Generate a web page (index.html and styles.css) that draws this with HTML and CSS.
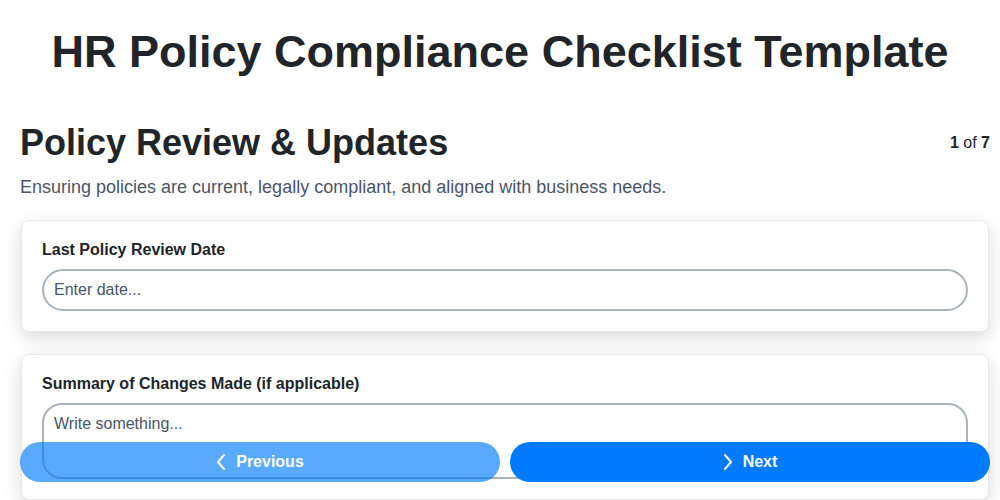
FILE: index.html
```html
<!DOCTYPE html>
<html>

<head>
  <meta charset="UTF-8">
  <title>HR Policy Compliance Checklist Template</title>
  <link rel="stylesheet" href="styles.css">
</head>

<body>
  <h1 class="page-title">HR Policy Compliance Checklist Template</h1>

  <div class="section-head">
    <h2 class="section-title">Policy Review &amp; Updates</h2>
    <div class="step-count"><b>1</b> of <b>7</b></div>
  </div>
  <p class="section-desc">Ensuring policies are current, legally compliant, and aligned with business needs.</p>

  <form class="checklist">
    <div class="card">
      <label for="review-date" class="field-label">Last Policy Review Date</label>
      <input type="text" id="review-date" class="field-input" placeholder="Enter date...">
    </div>
    <div class="card">
      <label for="changes" class="field-label">Summary of Changes Made (if applicable)</label>
      <textarea id="changes" class="field-textarea" rows="3" placeholder="Write something..."></textarea>
    </div>
  </form>

  <div class="nav-bar">
    <button type="button" class="nav-button prev">
      <svg class="chev" width="10" height="16" viewBox="0 0 10 16"><path d="M8 1 L2 8 L8 15" fill="none" stroke="#fff" stroke-width="2" stroke-linecap="round" stroke-linejoin="round"/></svg>
      Previous
    </button>
    <button type="button" class="nav-button next">
      <svg class="chev" width="10" height="16" viewBox="0 0 10 16"><path d="M2 1 L8 8 L2 15" fill="none" stroke="#fff" stroke-width="2" stroke-linecap="round" stroke-linejoin="round"/></svg>
      Next
    </button>
  </div>
</body>

</html>
```

FILE: styles.css
```css
html {
  height: 100%;
}

body {
  font-family: "Liberation Sans", Arial, Helvetica, sans-serif;
  color: #212529;
  margin: 0;
  padding: 26px 10px 0 20px;
  overflow: hidden;
  box-sizing: border-box;
  height: 100%;
}

.page-title {
  font-size: 45px;
  font-weight: bold;
  text-align: center;
  margin: 0 0 44px -10px;
}

.section-head {
  display: flex;
  justify-content: space-between;
  align-items: center;
}

.section-title {
  font-size: 36px;
  font-weight: bold;
  margin: 0;
}

.step-count {
  font-size: 16px;
}

.section-desc {
  font-size: 18px;
  color: #4a5568;
  margin: 13px 0 22px 0;
}

.card {
  background: #fff;
  border: 1px solid #e5e7eb;
  border-radius: 8px;
  box-shadow: 0 6px 18px rgba(0, 0, 0, 0.15);
  padding: 19px 20px 20px 20px;
  margin: 0 1px 22px 1px;
}

.field-label {
  display: block;
  font-size: 16px;
  font-weight: bold;
  line-height: 19px;
  margin-bottom: 10px;
}

.field-input,
.field-textarea {
  display: block;
  width: 100%;
  box-sizing: border-box;
  font-family: inherit;
  font-size: 16px;
  line-height: 19px;
  color: #212529;
  border: 2px solid #a9b3bc;
  outline: none;
  background: #fff;
}

.field-input {
  border-radius: 21px;
  padding: 9px 10px;
  height: 42px;
}

.field-textarea {
  border-radius: 20px;
  padding: 9px 10px;
  height: 76px;
  resize: none;
}

.field-input::placeholder,
.field-textarea::placeholder {
  color: #4a5568;
}

.nav-bar {
  position: fixed;
  left: 20px;
  right: 10px;
  bottom: 18px;
  display: flex;
  gap: 10px;
}

.nav-button {
  flex: 1;
  height: 40px;
  border: none;
  border-radius: 20px;
  background-color: #007bff;
  color: #fff;
  font-family: inherit;
  font-size: 16px;
  font-weight: bold;
  display: flex;
  align-items: center;
  justify-content: center;
  gap: 10px;
  cursor: pointer;
}

.nav-button.prev {
  opacity: 0.65;
}
```
